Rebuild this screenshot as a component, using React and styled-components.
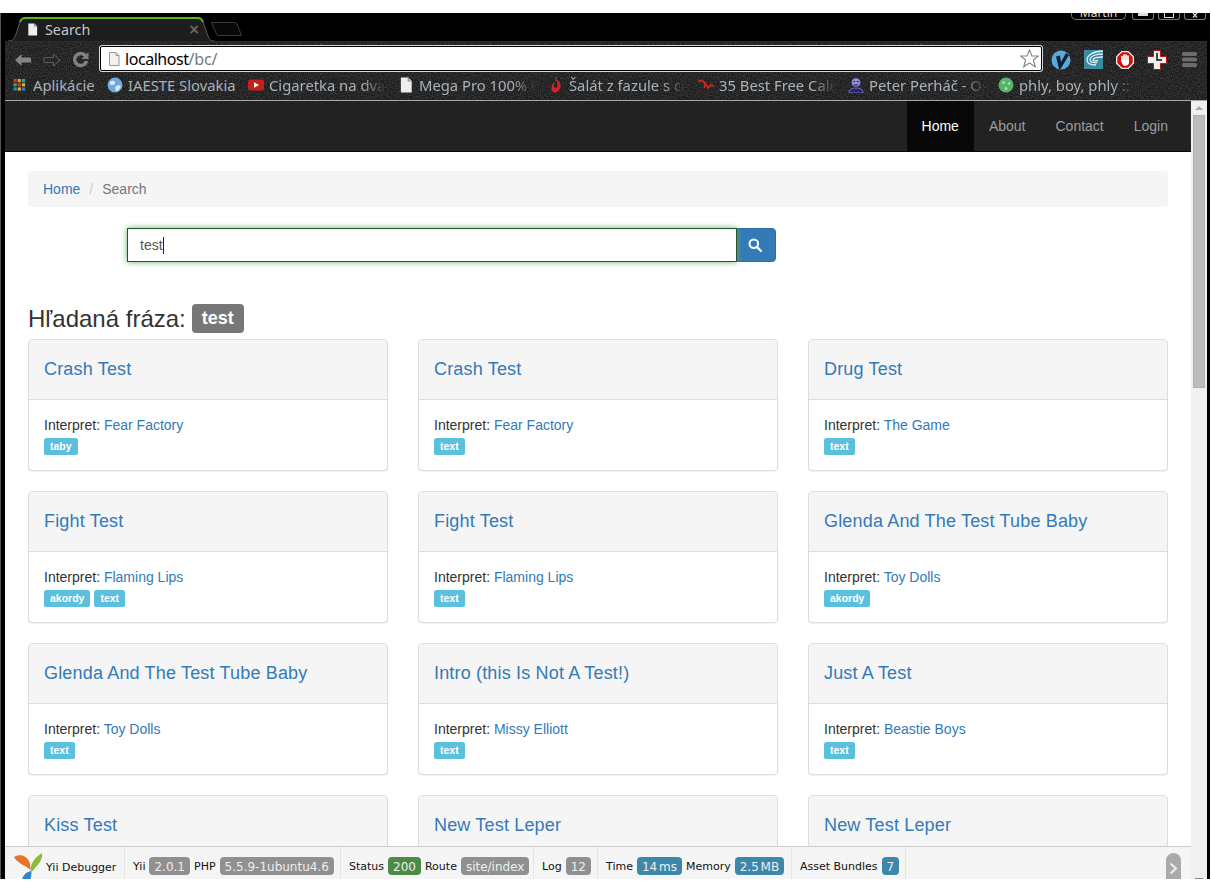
import React from "react";
import styled, { createGlobalStyle } from "styled-components";

const noise = `url("data:image/svg+xml,%3Csvg xmlns='http://www.w3.org/2000/svg' width='300' height='80'%3E%3Cfilter id='n'%3E%3CfeTurbulence type='fractalNoise' baseFrequency='.9' numOctaves='2' stitchTiles='stitch'/%3E%3CfeColorMatrix values='0 0 0 0 .5 0 0 0 0 .5 0 0 0 0 .5 .5 0 0 0 -.17'/%3E%3C/filter%3E%3Crect width='300' height='80' filter='url(%23n)'/%3E%3C/svg%3E")`;

const Global = createGlobalStyle`
  html, body { margin: 0; padding: 0; background: #fff; overflow: hidden; }
  * { box-sizing: border-box; }
`;

const Screen = styled.div`
  width: 1211px;
  height: 892px;
  padding: 13px 1px 13px 0;
  background: #fff;
  overflow: hidden;
`;
const Win = styled.div`
  height: 866px;
  background: #000;
  border-left: 1px solid #555;
  padding: 0 3px 0 4px;
  display: flex;
  flex-direction: column;
`;
const TabStrip = styled.div`
  height: 28px;
  flex: none;
  display: flex;
  align-items: flex-start;
  padding-left: 3px;
  overflow: hidden;
`;
const Tab = styled.div`
  position: relative;
  width: 207px;
  height: 24px;
  margin-top: 4px;
  flex: none;
  display: flex;
  align-items: center;
  padding: 0 15px 0 18px;
  font: 14.3px "Noto Sans", sans-serif;
  color: #c4c8cc;
`;
const TabShape = styled.svg`
  position: absolute;
  left: 0;
  top: 0;
`;
const TabIcon = styled.svg`
  position: relative;
  flex: none;
  margin-right: 6px;
`;
const TabTitle = styled.span`
  position: relative;
  flex: 1;
`;
const TabClose = styled.span`
  position: relative;
  font: bold 14px "DejaVu Sans", sans-serif;
  color: #6a6a6a;
`;
const NewTab = styled.svg`
  flex: none;
  margin: 9px 0 0 -4px;
`;
const WinControls = styled.div`
  margin-left: auto;
  height: 7px;
  display: flex;
  gap: 4px;
  font: 12px "Noto Sans", sans-serif;
  color: #ddd;
  padding-right: 1px;
`;
const UserPill = styled.div`
  width: 55px;
  height: 7px;
  margin-right: 2px;
  border: 1px solid #777;
  border-top: 0;
  border-radius: 0 0 5px 5px;
  text-align: center;
  line-height: 0;
  overflow: hidden;
`;
const WinBtn = styled.div`
  width: 22px;
  height: 7px;
  border: 1px solid #777;
  border-top: 0;
  border-radius: 0 0 3px 3px;
  display: flex;
  justify-content: center;
  align-items: flex-start;
`;
const WinGlyph = styled.span`
  display: block;
  width: ${(p) => p.$w}px;
  height: ${(p) => p.$h}px;
  background: ${(p) => (p.$fill ? "#ddd" : "transparent")};
  border: ${(p) => (p.$fill ? "0" : "1px solid #ddd")};
  border-top: 0;
`;

const Toolbar = styled.div`
  height: 31px;
  flex: none;
  background: #1a1a1a ${noise};
  display: flex;
  align-items: flex-start;
  padding: 4px 0 0 3px;
  border-top: 1px solid #2c2c2c;
  position: relative;
  z-index: 1;
`;
const NavBtn = styled.div`
  width: 29px;
  height: 27px;
  flex: none;
  display: flex;
  align-items: center;
  justify-content: center;
`;
const Omni = styled.div`
  width: 944px;
  height: 27px;
  margin: -1px 2px 0 4px;
  background: #fff;
  border: 1px solid #d8d8d8;
  outline: 1px solid #000;
  outline-offset: -2px;
  border-radius: 3px;
  display: flex;
  align-items: center;
  padding: 0 3px 0 7px;
  font: 16px "Noto Sans", sans-serif;
  letter-spacing: -0.45px;
  color: #000;
`;
const OmniPath = styled.span`
  color: #777;
  flex: 1;
  letter-spacing: -0.15px;
`;
const OmniIcon = styled.svg`
  flex: none;
  margin-right: 4px;
`;
const ExtBtn = styled.div`
  width: 32px;
  height: 27px;
  flex: none;
  display: flex;
  align-items: center;
  justify-content: center;
`;

const Bookmarks = styled.div`
  height: 29px;
  flex: none;
  background: #1a1a1a ${noise};
  border-bottom: 1px solid #a8a8a8;
  display: flex;
  align-items: center;
  padding: 0 0 2px 7px;
  font: 14.8px "Noto Sans", sans-serif;
  color: #a9b2ba;
`;
const Bookmark = styled.div`
  width: ${(p) => p.$w}px;
  flex: none;
  display: flex;
  align-items: center;
  gap: 5px;
  padding-right: 12px;
`;
const BmIcon = styled.svg`
  flex: none;
`;
const BmLabel = styled.span`
  flex: 1;
  min-width: 0;
  white-space: nowrap;
  overflow: hidden;
  ${(p) =>
    p.$fade
      ? "mask-image: linear-gradient(to right, #000 80%, transparent 100%);"
      : ""}
`;

const Viewport = styled.div`
  flex: 1;
  min-height: 0;
  display: flex;
  position: relative;
`;
const Page = styled.div`
  flex: 1;
  min-width: 0;
  background: #fff;
  overflow: hidden;
  position: relative;
  font: 14px/20px "Liberation Sans", Arial, sans-serif;
  color: #333;
`;
const Scrollbar = styled.div`
  width: 16px;
  flex: none;
  background: #f0f0f0;
  display: flex;
  flex-direction: column;
  align-items: center;
  padding-top: 14px;
  position: relative;
`;
const ScrollUp = styled.span`
  position: absolute;
  top: 5px;
  left: 4px;
  width: 0;
  height: 0;
  border-left: 4px solid transparent;
  border-right: 4px solid transparent;
  border-bottom: 4px solid #aaa;
`;
const ScrollThumb = styled.div`
  width: 12px;
  height: 273px;
  background: #bcbcbc;
  border: 1px solid #b0b0b0;
`;
const ScrollDown = styled.span`
  position: absolute;
  bottom: 0;
  left: 4px;
  width: 8px;
  height: 1px;
  background: #888;
`;

const Navbar = styled.nav`
  height: 51px;
  background: #222;
  border-bottom: 1px solid #080808;
  display: flex;
  justify-content: flex-end;
  padding-right: 8px;
`;
const NavLink = styled.a`
  height: 50px;
  display: flex;
  align-items: center;
  padding: 0 15px;
  color: ${(p) => (p.$active ? "#fff" : "#9d9d9d")};
  background: ${(p) => (p.$active ? "#080808" : "transparent")};
`;
const Content = styled.div`
  padding: 19px 23px 0;
`;
const Breadcrumb = styled.div`
  height: 36px;
  background: #f5f5f5;
  border-radius: 4px;
  padding: 8px 15px;
  color: #777;
  display: flex;
`;
const Link = styled.a`
  color: #337ab7;
  text-decoration: none;
`;
const Sep = styled.span`
  color: #ccc;
  padding: 0 9px;
`;
const SearchRow = styled.div`
  width: 649px;
  height: 34px;
  margin: 21px 0 0 99px;
  display: flex;
`;
const SearchInput = styled.div`
  flex: 1;
  border: 1px solid #2b542c;
  box-shadow: inset 0 1px 1px rgba(0, 0, 0, 0.075), 0 0 6px #67b168;
  padding: 6px 12px;
  color: #555;
  display: flex;
  align-items: center;
  position: relative;
  z-index: 1;
`;
const Caret = styled.span`
  display: block;
  width: 1px;
  height: 17px;
  background: #222;
`;
const SearchBtn = styled.div`
  width: 39px;
  background: #337ab7;
  border: 1px solid #2e6da4;
  border-radius: 0 4px 4px 0;
  display: flex;
  align-items: center;
  justify-content: center;
  padding: 0 3px 1px 0;
`;
const Heading = styled.h3`
  margin: 42px 0 6px;
  height: 29px;
  font: 500 24px/29px "Liberation Sans", Arial, sans-serif;
  color: #333;
  display: flex;
  align-items: center;
  gap: 6px;
`;
const TermLabel = styled.span`
  background: #777;
  color: #fff;
  font: bold 18px/18px "Liberation Sans", Arial, sans-serif;
  padding: 5px 10px 6px;
  border-radius: 4px;
`;
const Grid = styled.div`
  display: grid;
  grid-template-columns: repeat(3, 360px);
  column-gap: 30px;
  row-gap: 20px;
`;
const Card = styled.div`
  border: 1px solid #ddd;
  border-radius: 4px;
  background: #fff;
  box-shadow: 0 1px 1px rgba(0, 0, 0, 0.05);
  height: 132px;
  overflow: hidden;
`;
const CardHead = styled.div`
  height: 60px;
  background: #f5f5f5;
  border-bottom: 1px solid #ddd;
  padding: 0 15px 2px;
  display: flex;
  align-items: center;
`;
const CardTitle = styled.a`
  font-size: 18px;
  line-height: 20px;
  letter-spacing: 0.17px;
  color: #337ab7;
`;
const CardBody = styled.div`
  padding: 15px 15px 0;
  color: #333;
`;
const Tags = styled.div`
  display: flex;
  gap: 4px;
  margin-top: 3px;
`;
const Tag = styled.span`
  background: #5bc0de;
  color: #fff;
  font: bold 10.5px/11px "Liberation Sans", Arial, sans-serif;
  padding: 3px 6px;
  border-radius: 2.6px;
`;

const Debug = styled.div`
  position: absolute;
  left: 0;
  right: 0;
  bottom: 0;
  height: 33px;
  background: #f5f5f5;
  border-top: 1px solid #ccc;
  display: flex;
  font: 11px/20px "DejaVu Sans", Verdana, sans-serif;
  color: #111;
`;
const DebugBlock = styled.div`
  display: flex;
  align-items: flex-start;
  gap: 4px;
  height: 100%;
  width: ${(p) => p.$w}px;
  flex: none;
  padding: 10px 0 0 8px;
  border-right: 1px solid #e4e4e4;
`;
const DebugBrand = styled(DebugBlock)`
  padding: 6px 0 0 9px;
  gap: 3px;
  overflow: hidden;
`;
const BrandText = styled.span`
  margin-top: 5px;
`;
const Badge = styled.span`
  font-size: 12px;
  line-height: 20px;
  height: 18px;
  padding: 0 5px;
  border-radius: 4px;
  word-spacing: -2px;
  color: #eee;
  background: ${(p) => p.$bg};
`;
const Toggle = styled.div`
  position: absolute;
  right: 10px;
  bottom: 0;
  width: 15px;
  height: 26px;
  border-radius: 8px 8px 0 0;
  background: #aaa;
  display: flex;
  align-items: center;
  justify-content: center;
  padding-top: 4px;
`;

const GRAY = "#909090";
const GREEN = "#4a8b4a";
const BLUE = "#3d87ab";

const results = [
  ["Crash Test", "Fear Factory", ["taby"]],
  ["Crash Test", "Fear Factory", ["text"]],
  ["Drug Test", "The Game", ["text"]],
  ["Fight Test", "Flaming Lips", ["akordy", "text"]],
  ["Fight Test", "Flaming Lips", ["text"]],
  ["Glenda And The Test Tube Baby", "Toy Dolls", ["akordy"]],
  ["Glenda And The Test Tube Baby", "Toy Dolls", ["text"]],
  ["Intro (this Is Not A Test!)", "Missy Elliott", ["text"]],
  ["Just A Test", "Beastie Boys", ["text"]],
  ["Kiss Test"],
  ["New Test Leper"],
  ["New Test Leper"],
];

const PageGlyph = ({ size = 14, fill = "#eee", stroke = "none" }) => (
  <svg width={size} height={size} viewBox="0 0 14 14" style={{ display: "block" }}>
    <path d="M2.500 .5H9L12 3.500V13.500H2.500Z" fill={fill} stroke={stroke} />
    <path d="M9 .5V3.500H12" fill="none" stroke={stroke === "none" ? "#888" : stroke} />
  </svg>
);

const AppsIcon = () => (
  <BmIcon width="16" height="16" viewBox="0 0 16 16">
    {[
      ["#d33", "#e8a020", "#2a8"],
      ["#3a5", "#d33", "#e8b020"],
      ["#28c", "#e8b020", "#28c"],
    ].map((row, r) =>
      row.map((c, i) => <rect key={`${r}${i}`} x={1.500 + i * 4.2} y={2 + r * 4.2} width="3.200" height="3.200" fill={c} />)
    )}
  </BmIcon>
);
const GlobeIcon = () => (
  <BmIcon width="16" height="16" viewBox="0 0 16 16">
    <circle cx="8" cy="8" r="7.500" fill="#6fa8dc" />
    <path d="M3 5c2-2 4-1 5 0S7 8 5 8 2 7 3 5ZM9 9c2-1 4-1 5 0-1 3-3 5-5 5-1-2-1-4 0-5Z" fill="#dfe9f3" />
  </BmIcon>
);
const YtIcon = () => (
  <BmIcon width="16" height="16" viewBox="0 0 16 16">
    <rect y="2.500" width="16" height="11" rx="2.500" fill="#c4201c" />
    <path d="M6 5.200V10.800L11 8Z" fill="#fff" />
  </BmIcon>
);
const ChiliIcon = () => (
  <BmIcon width="16" height="16" viewBox="0 0 16 16">
    <path d="M8 0V4" stroke="#3a7a2a" strokeWidth="1.200" />
    <path d="M8 3C11 3 13 6 12.500 9.500 12 13 9.500 15.500 7 15.500 4.500 15.500 3 13 3.500 10.500 4 8 5 6 6.500 5 5.500 8 6 11 8 11 10 11 10 7 8 3Z" fill="#d8202a" />
  </BmIcon>
);
const SquiggleIcon = () => (
  <BmIcon width="16" height="16" viewBox="0 0 16 16">
    <path d="M0 4.500 4 3.500 7 6 6.500 11M6.500 5 10 11 12.500 8 16 9.500" fill="none" stroke="#c8281e" strokeWidth="1.800" />
  </BmIcon>
);
const PersonIcon = () => (
  <BmIcon width="16" height="16" viewBox="0 0 16 16">
    <path d="M1 16C1 12 4 11 8 11S15 12 15 16Z" fill="#2b2470" stroke="#ccd" strokeWidth=".5" />
    <circle cx="8" cy="5.500" r="4.800" fill="#8f8fc8" stroke="#2b2470" />
    <path d="M5.500 4.500H7M9 4.500H10.500M6 8H10" stroke="#1a1550" strokeWidth="1" />
  </BmIcon>
);
const SpiralIcon = () => (
  <BmIcon width="16" height="16" viewBox="0 0 16 16">
    <circle cx="8" cy="8" r="7.500" fill="#58b368" />
    <circle cx="5.500" cy="5.500" r="1.500" fill="#a8dcaf" />
    <circle cx="11" cy="6.500" r="1.300" fill="#a8dcaf" />
    <circle cx="8" cy="11.500" r="1.500" fill="#a8dcaf" />
  </BmIcon>
);

const marks = [
  { w: 95, label: "Aplikácie", icon: <AppsIcon /> },
  { w: 141, label: "IAESTE Slovakia", icon: <GlobeIcon /> },
  { w: 150, label: "Cigaretka na dva", fade: true, icon: <YtIcon /> },
  { w: 150, label: "Mega Pro 100% Protein", fade: true, icon: <BmIcon as="span"><PageGlyph size={16} /></BmIcon> },
  { w: 150, label: "Šalát z fazule s cibuľou", fade: true, icon: <ChiliIcon /> },
  { w: 150, label: "35 Best Free Calendar", fade: true, icon: <SquiggleIcon /> },
  { w: 150, label: "Peter Perháč - Osobná", fade: true, icon: <PersonIcon /> },
  { w: 150, label: "phly, boy, phly :: en", fade: true, icon: <SpiralIcon /> },
];

export default function App() {
  return (
    <Screen>
      <Global />
      <Win>
        <TabStrip>
          <Tab>
            <TabShape width="207" height="24" viewBox="0 0 207 24">
              <path d="M0 24C5 24 6 22 8 17L12 5C13 2 14 1 17 1H190C193 1 194 2 195 5L200 19C201 23 203 24 207 24Z" fill="#1d1d1d" />
              <path d="M0 24C5 24 6 22 8 17L12 5M195 5L200 19C201 23 203 24 207 24" fill="none" stroke="#5a5a5a" />
              <path d="M12 5C13 2 14 1 17 1H190C193 1 194 2 195 5" fill="none" stroke="#58b810" strokeWidth="2" />
            </TabShape>
            <TabIcon as="span"><PageGlyph size={13} /></TabIcon>
            <TabTitle>Search</TabTitle>
            <TabClose>×</TabClose>
          </Tab>
          <NewTab width="32" height="14" viewBox="0 0 32 14">
            <path d="M.5 .5H23C25 .5 26 1.500 26.500 3L30.500 13.500H8C6 13.500 5.500 12.500 5 11Z" fill="#080808" stroke="#3c3c3c" />
          </NewTab>
          <WinControls>
            <UserPill>Martin</UserPill>
            <WinBtn><WinGlyph $w={10} $h={3} $fill /></WinBtn>
            <WinBtn><WinGlyph $w={10} $h={5} /></WinBtn>
            <WinBtn>
              <svg width="10" height="6" viewBox="0 0 10 6"><path d="M3 0 7 4.500M7 0 3 4.500" stroke="#ddd" strokeWidth="1.200" /></svg>
            </WinBtn>
          </WinControls>
        </TabStrip>

        <Toolbar>
          <NavBtn>
            <svg width="18" height="14" viewBox="0 0 18 14"><path d="M1 7 7.500 1V4.500H17V9.500H7.500V13Z" fill="#858585" /></svg>
          </NavBtn>
          <NavBtn>
            <svg width="18" height="14" viewBox="0 0 18 14"><path d="M17 7 10.500 1V4.500H1V9.500H10.500V13Z" fill="none" stroke="#5e5e5e" /></svg>
          </NavBtn>
          <NavBtn>
            <svg width="17" height="17" viewBox="0 0 17 17">
              <path d="M13.500 5A6 6 0 1 0 14.500 10" fill="none" stroke="#808080" strokeWidth="3.500" />
              <path d="M16.500 1V8H9.500Z" fill="#808080" />
            </svg>
          </NavBtn>
          <Omni>
            <OmniIcon as="span"><PageGlyph size={14} fill="#f2f2f2" stroke="#999" /></OmniIcon>
            localhost<OmniPath>/bc/</OmniPath>
            <svg width="19" height="19" viewBox="0 0 19 19">
              <path d="M9.500 1 12 7H18.300L13.400 11 15.200 17.800 9.500 14 3.800 17.800 5.600 11 .7 7H7Z" fill="#fff" stroke="#8a8a8a" strokeWidth="1.200" />
            </svg>
          </Omni>
          <ExtBtn>
            <svg width="20" height="20" viewBox="0 0 20 20">
              <circle cx="10" cy="10" r="9.500" fill="#5aa9dc" />
              <path d="M5 6.500 9 5.500 10 12 15 3 18 5 9.500 19H8Z" fill="#10202c" />
            </svg>
          </ExtBtn>
          <ExtBtn>
            <svg width="19" height="19" viewBox="0 0 19 19">
              <rect width="19" height="19" fill="#3a8ba4" />
              <g fill="none" stroke="#dff1f5" strokeWidth="1.300">
                <path d="M19 1C10 1 3 5 3 10C3 13 6 15 12 15" />
                <path d="M19 4C12 4 6 6 6 10C6 12 9 13 13 12.500" />
                <path d="M19 7C14 7 9 8 9 10C9 11 12 11 14 10.500" />
              </g>
            </svg>
          </ExtBtn>
          <ExtBtn>
            <svg width="18" height="18" viewBox="0 0 18 18">
              <path d="M5.500 0H12.500L18 5.500V12.500L12.500 18H5.500L0 12.500V5.500Z" fill="#eee" />
              <path d="M6 1.300H12L16.700 6V12L12 16.700H6L1.300 12V6Z" fill="#d5100a" />
              <g stroke="#fff" strokeWidth="1.700" strokeLinecap="round">
                <path d="M6 5.500V10M8 4V10M10 4V10M12 5V11" />
              </g>
              <path d="M5 9H13V11.500C13 13.500 11.500 14.800 9.300 14.800 7 14.800 6.200 13.500 5 9Z" fill="#fff" />
            </svg>
          </ExtBtn>
          <ExtBtn>
            <svg width="20" height="20" viewBox="0 0 20 20">
              <path d="M6.500 .5H13.500V6.500H19.500V13.500H13.500V19.500H6.500V13.500H.5V6.500H6.500Z" fill="#eee" stroke="#b01818" />
              <path d="M10 3V10H15" fill="none" stroke="#111" strokeWidth="1.500" />
            </svg>
          </ExtBtn>
          <ExtBtn>
            <svg width="15" height="15" viewBox="0 0 15 15">
              <rect y="0" width="15" height="4" rx="1.500" fill="#6c6c6c" />
              <rect y="5.500" width="15" height="4" rx="1.500" fill="#6c6c6c" />
              <rect y="11" width="15" height="4" rx="1.500" fill="#6c6c6c" />
            </svg>
          </ExtBtn>
        </Toolbar>

        <Bookmarks>
          {marks.map((m) => (
            <Bookmark key={m.label} $w={m.w}>
              {m.icon}
              <BmLabel $fade={m.fade}>{m.label}</BmLabel>
            </Bookmark>
          ))}
        </Bookmarks>

        <Viewport>
          <Page>
            <Navbar>
              <NavLink $active>Home</NavLink>
              <NavLink>About</NavLink>
              <NavLink>Contact</NavLink>
              <NavLink>Login</NavLink>
            </Navbar>
            <Content>
              <Breadcrumb>
                <Link>Home</Link>
                <Sep>/</Sep>
                <span>Search</span>
              </Breadcrumb>
              <SearchRow>
                <SearchInput>test<Caret /></SearchInput>
                <SearchBtn>
                  <svg width="14" height="14" viewBox="0 0 14 14">
                    <circle cx="5.800" cy="5.800" r="4.300" fill="none" stroke="#fff" strokeWidth="2" />
                    <path d="M9 9 13 13" stroke="#fff" strokeWidth="2.400" strokeLinecap="round" />
                  </svg>
                </SearchBtn>
              </SearchRow>
              <Heading>
                Hľadaná fráza:
                <TermLabel>test</TermLabel>
              </Heading>
              <Grid>
                {results.map(([title, artist, tags], i) => (
                  <Card key={i}>
                    <CardHead><CardTitle>{title}</CardTitle></CardHead>
                    {artist && (
                      <CardBody>
                        Interpret: <Link>{artist}</Link>
                        <Tags>
                          {tags.map((t) => <Tag key={t}>{t}</Tag>)}
                        </Tags>
                      </CardBody>
                    )}
                  </Card>
                ))}
              </Grid>
            </Content>
            <Debug>
              <DebugBrand $w={120}>
                <svg width="29" height="26" viewBox="0 0 29 26" style={{ flex: "none" }}>
                  <path d="M0 4C5 1 12 2 15 8 16.500 11 16.500 14 16 17 12 12 5 12 0 4Z" fill="#e8742a" />
                  <path d="M28 0C29 6 25 11 21 15 20 17 18.500 18 17 19 15 12 21 4 28 0Z" fill="#8cbc3c" />
                  <path d="M17 18C18 21 17 24 16 28H8C8 23 12 19 17 18Z" fill="#2f86c8" />
                </svg>
                <BrandText>Yii Debugger</BrandText>
              </DebugBrand>
              <DebugBlock $w={216}>
                Yii <Badge $bg={GRAY}>2.0.1</Badge> PHP <Badge $bg={GRAY}>5.5.9-1ubuntu4.6</Badge>
              </DebugBlock>
              <DebugBlock $w={193}>
                Status <Badge $bg={GREEN}>200</Badge> Route <Badge $bg={GRAY}>site/index</Badge>
              </DebugBlock>
              <DebugBlock $w={64}>
                Log <Badge $bg={GRAY}>12</Badge>
              </DebugBlock>
              <DebugBlock $w={194}>
                Time <Badge $bg={BLUE}>14 ms</Badge> Memory <Badge $bg={BLUE}>2.5 MB</Badge>
              </DebugBlock>
              <DebugBlock $w={114}>
                Asset Bundles <Badge $bg={BLUE}>7</Badge>
              </DebugBlock>
              <Toggle>
                <svg width="9" height="13" viewBox="0 0 9 13"><path d="M1.500 1.500 7 6.500 1.500 11.500" fill="none" stroke="#eee" strokeWidth="2" /></svg>
              </Toggle>
            </Debug>
          </Page>
          <Scrollbar>
            <ScrollUp />
            <ScrollThumb />
            <ScrollDown />
          </Scrollbar>
        </Viewport>
      </Win>
    </Screen>
  );
}
